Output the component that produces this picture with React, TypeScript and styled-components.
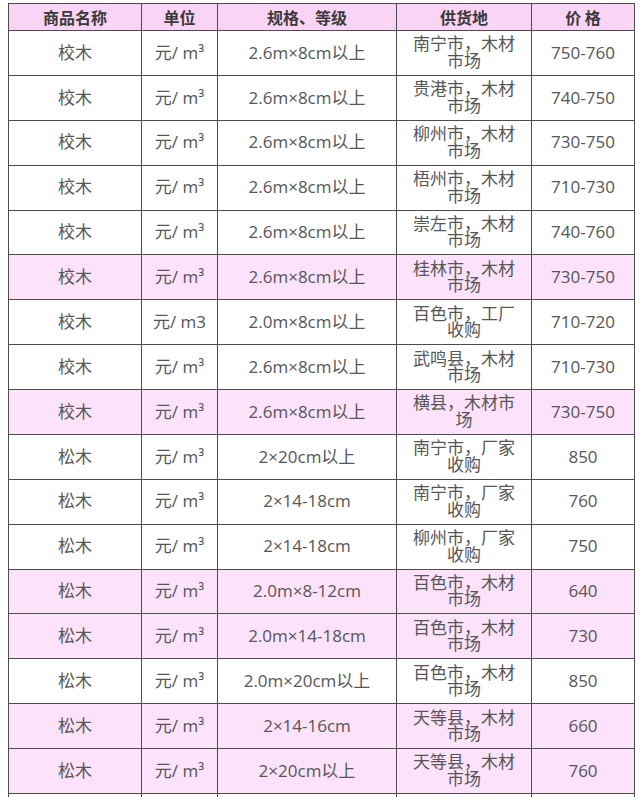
import React from "react";
import styled, { createGlobalStyle } from "styled-components";

const Global = createGlobalStyle`
  html, body { margin: 0; padding: 0; background: #ffffff; }
  body { font-family: "Open Sans", "Noto Sans CJK SC", sans-serif; }
`;

const Page = styled.div`
  padding: 3px 0 0 8px;
  height: 794px;
  overflow: hidden;
`;

const Table = styled.table`
  border-collapse: collapse;
  table-layout: fixed;
  width: 626px;
`;

const HeadCell = styled.th`
  height: 26px;
  padding: 0;
  background: #fad4f5;
  border: 1px solid #4d4d4d;
  color: #3a3a3a;
  font-family: "Noto Sans CJK SC", sans-serif;
  font-size: 16px;
  font-weight: 700;
  line-height: 1;
  text-align: center;
  vertical-align: middle;
`;

const Row = styled.tr<{ $pink?: boolean }>`
  background: ${(p) => (p.$pink ? "#fce2fb" : "#ffffff")};
`;

const Cell = styled.td`
  height: 43.88px;
  padding: 0 10px;
  border: 1px solid #4d4d4d;
  color: #565656;
  font-size: 17px;
  line-height: 16.5px;
  text-align: center;
  vertical-align: middle;
  word-break: break-all;
`;

type Item = {
  name: string;
  unit: string;
  spec: string;
  place: string;
  price: string;
  pink?: boolean;
};

const M3 = "元/ m³";
const A = "校木";
const S = "松木";

const rows: Item[] = [
  { name: A, unit: M3, spec: "2.6m×8cm以上", place: "南宁市，木材市场", price: "750-760" },
  { name: A, unit: M3, spec: "2.6m×8cm以上", place: "贵港市，木材市场", price: "740-750" },
  { name: A, unit: M3, spec: "2.6m×8cm以上", place: "柳州市，木材市场", price: "730-750" },
  { name: A, unit: M3, spec: "2.6m×8cm以上", place: "梧州市，木材市场", price: "710-730" },
  { name: A, unit: M3, spec: "2.6m×8cm以上", place: "崇左市，木材市场", price: "740-760" },
  { name: A, unit: M3, spec: "2.6m×8cm以上", place: "桂林市，木材市场", price: "730-750", pink: true },
  { name: A, unit: "元/ m3", spec: "2.0m×8cm以上", place: "百色市，工厂收购", price: "710-720" },
  { name: A, unit: M3, spec: "2.6m×8cm以上", place: "武鸣县，木材市场", price: "710-730" },
  { name: A, unit: M3, spec: "2.6m×8cm以上", place: "横县，木材市场", price: "730-750", pink: true },
  { name: S, unit: M3, spec: "2×20cm以上", place: "南宁市，厂家收购", price: "850" },
  { name: S, unit: M3, spec: "2×14-18cm", place: "南宁市，厂家收购", price: "760" },
  { name: S, unit: M3, spec: "2×14-18cm", place: "柳州市，厂家收购", price: "750" },
  { name: S, unit: M3, spec: "2.0m×8-12cm", place: "百色市，木材市场", price: "640", pink: true },
  { name: S, unit: M3, spec: "2.0m×14-18cm", place: "百色市，木材市场", price: "730", pink: true },
  { name: S, unit: M3, spec: "2.0m×20cm以上", place: "百色市，木材市场", price: "850" },
  { name: S, unit: M3, spec: "2×14-16cm", place: "天等县，木材市场", price: "660", pink: true },
  { name: S, unit: M3, spec: "2×20cm以上", place: "天等县，木材市场", price: "760", pink: true },
  { name: "", unit: "", spec: "", place: "", price: "" },
];

export default function App() {
  return (
    <>
      <Global />
      <Page>
        <Table>
          <colgroup>
            <col style={{ width: 133 }} />
            <col style={{ width: 76 }} />
            <col style={{ width: 179 }} />
            <col style={{ width: 135 }} />
            <col style={{ width: 103 }} />
          </colgroup>
          <thead>
            <tr>
              <HeadCell>商品名称</HeadCell>
              <HeadCell>单位</HeadCell>
              <HeadCell>规格、等级</HeadCell>
              <HeadCell>供货地</HeadCell>
              <HeadCell>价 格</HeadCell>
            </tr>
          </thead>
          <tbody>
            {rows.map((r, i) => (
              <Row key={i} $pink={r.pink}>
                <Cell>{r.name}</Cell>
                <Cell>{r.unit}</Cell>
                <Cell>{r.spec}</Cell>
                <Cell>{r.place}</Cell>
                <Cell>{r.price}</Cell>
              </Row>
            ))}
          </tbody>
        </Table>
      </Page>
    </>
  );
}
